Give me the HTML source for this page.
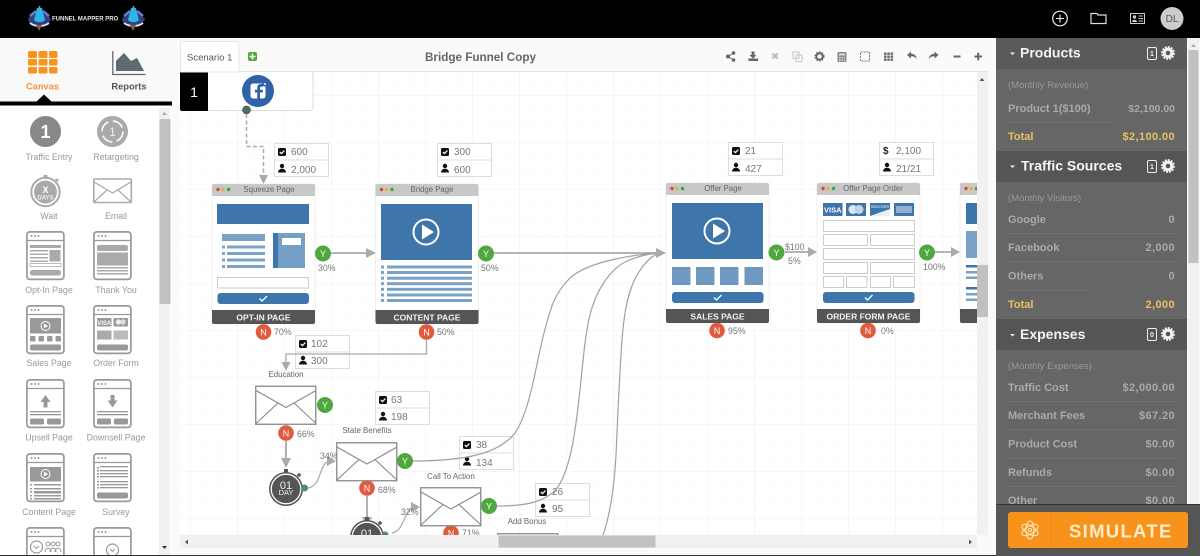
<!DOCTYPE html>
<html><head><meta charset="utf-8"><title>Funnel Mapper</title>
<style>
html,body{margin:0;padding:0;background:#fff;width:1200px;height:556px;overflow:hidden}
svg{display:block;font-family:"Liberation Sans",sans-serif}
.pl{font-size:8.8px;fill:#999;text-anchor:middle}
.st{font-size:10px;fill:#777}
.cl{font-size:7.8px;fill:#666;text-anchor:middle}
.ft{font-size:8.5px;font-weight:bold;fill:#f2f2f2;text-anchor:middle}
.pc{font-size:8.8px;fill:#777}
.lb{font-size:7.9px;fill:#666;text-anchor:middle}
.h{font-size:14px;font-weight:bold;fill:#f4f4f4}
.sub{font-size:9.5px;fill:#999}
.r{font-size:11px;font-weight:bold;fill:#aaa}
.v{font-size:11px;font-weight:bold;fill:#aaa;text-anchor:end;letter-spacing:.4px}
.y{fill:#e8c060}
.nt{font-size:9px;fill:#fff;text-anchor:middle}
</style></head><body>
<svg width="1200" height="556" viewBox="0 0 1200 556" xmlns="http://www.w3.org/2000/svg">
<defs>
<pattern id="g" width="15.67" height="15.67" patternUnits="userSpaceOnUse" x="3" y="2"><path d="M15.67 0V15.67M0 15.67H15.67" stroke="#f8f8f8" stroke-width="1" fill="none"/></pattern>
<pattern id="G" width="47" height="47" patternUnits="userSpaceOnUse" x="3" y="2"><path d="M47 0V47M0 47H47" stroke="#efefef" stroke-width="1" fill="none"/></pattern>
<clipPath id="cv"><rect x="180" y="72" width="797" height="463"/></clipPath>
<g id="st"><rect x=".5" y=".5" width="54" height="16.5" fill="#fff" stroke="#ddd"/><rect x=".5" y="17" width="54" height="16.5" fill="#fff" stroke="#ddd"/>
<rect x="4" y="5" width="8" height="8" rx="1.5" fill="#111"/><path d="M5.8 9l1.6 1.6 3-3" stroke="#fff" stroke-width="1.2" fill="none"/>
<circle cx="8" cy="23" r="2.2" fill="#111"/><path d="M4 29.5c0-5 8-5 8 0z" fill="#111"/></g>
<g id="stnc"><rect x=".5" y=".5" width="54" height="16.5" fill="#fff" stroke="#ddd"/><rect x=".5" y="17" width="54" height="16.5" fill="#fff" stroke="#ddd"/>
<circle cx="8" cy="23" r="2.2" fill="#111"/><path d="M4 29.5c0-5 8-5 8 0z" fill="#111"/></g>
<g id="card"><rect x="0" y="0" width="103" height="140" rx="2" fill="#fff" stroke="#e4e4e4" stroke-width=".6"/><path d="M0 12V2a2 2 0 0 1 2-2H101a2 2 0 0 1 2 2V12z" fill="#c8c8c8"/>
<circle cx="6" cy="5.5" r="1.7" fill="#d8483a"/><circle cx="11" cy="5.5" r="1.7" fill="#e0b040"/><circle cx="16.500" cy="5.500" r="1.700" fill="#3da24a"/>
<path d="M0 126H103V138a2 2 0 0 1-2 2H2a2 2 0 0 1-2-2z" fill="#555"/></g>
<g id="vid"><rect x="0" y="0" width="91" height="56" fill="#3e76ab"/><circle cx="45" cy="28" r="12.500" fill="none" stroke="#fff" stroke-width="2"/><path d="M41 20.500L53 28 41 35.500z" fill="#fff"/></g>
<g id="btn"><rect x="0" y="0" width="91.500" height="11" rx="3" fill="#3e76ab"/><path d="M42 5.500l2.500 2.500 5-5" stroke="#dff" stroke-width="1.500" fill="none"/></g>
<g id="env"><rect x=".75" y=".75" width="60" height="38" fill="#fff" stroke="#888" stroke-width="1.300"/><path d="M1 5L31 22 61 5M1 38L23 17.500M61 38L39 17.500" stroke="#888" stroke-width="1.100" fill="none"/></g>
<g id="timer"><circle cx="0" cy="0" r="17" fill="#555"/><circle cx="0" cy="0" r="14.800" fill="none" stroke="#fff" stroke-width="1.300"/><rect x="-2" y="-20" width="4" height="3.500" fill="#555"/><circle cx="13" cy="-14" r="1.800" fill="#555"/></g>
<g id="wf"><rect x=".9" y=".9" width="37" height="47.500" rx="3" fill="#fff" stroke="#999" stroke-width="1.700"/><path d="M1 9.500H38" stroke="#999" stroke-width="1.300"/><circle cx="5.500" cy="5" r="1" fill="#999"/><circle cx="9" cy="5" r="1" fill="#999"/><circle cx="12.500" cy="5" r="1" fill="#999"/></g>
<g id="orn"><path d="M1 13C2 8 7 6 12 6C17 6 22 9 24 12C22 17 17 19 12 19C7 19 2 17 1 13z" fill="#33407e"/><path d="M7 13L10 1H15L18 13C15 16 10 16 7 13z" fill="#2fb4ea"/><path d="M3 9L9 4M22 9L16 4" stroke="#5d7fd0" stroke-width="2.500"/><path d="M3 16C8 20 17 20 22 16" stroke="#dfe6f8" stroke-width="1.800" fill="none"/><path d="M9 18L12 24L15 18z" fill="#7a6630"/><circle cx="12.500" cy="0" r="1" fill="#4fd0c0"/></g>
</defs>

<!-- backdrop -->
<rect width="1200" height="556" fill="#fafafa"/>

<!-- canvas -->
<rect x="180" y="72" width="797" height="463" fill="#fff"/>
<rect x="180" y="72" width="797" height="463" fill="url(#g)"/>
<rect x="180" y="72" width="797" height="463" fill="url(#G)"/>
<g clip-path="url(#cv)">
<!-- fb node -->
<rect x="180.500" y="71" width="132.500" height="39.500" rx="3" fill="#fff" stroke="#ddd"/>
<path d="M180 72H208V111H182a2 2 0 0 1-2-2z" fill="#000"/>
<text x="194" y="97" font-size="14" fill="#fff" text-anchor="middle">1</text>
<circle cx="258" cy="91" r="16" fill="#2f62a6"/><rect x="250.500" y="83.500" width="15" height="15" rx="2.500" fill="#fff"/>
<path d="M260 98.500V92.500h2.600l.4-2.800H260V88c0-.8.300-1.300 1.400-1.300H263V84.100c-2.900-.4-5.700.1-5.700 3.500v2.100h-2.400v2.800h2.400v6z" fill="#2f62a6"/>
<circle cx="265" cy="84" r="2.500" fill="#2f62a6"/><circle cx="265" cy="84" r="1" fill="#fff"/>
<circle cx="246.500" cy="110" r="4" fill="#4f6b60" stroke="#333" stroke-width=".5"/>
<path d="M246.500 114V146.500H263.500V176" fill="none" stroke="#aaa" stroke-width="1.500" stroke-dasharray="4 2.500"/>
<path d="M259 175H268L263.500 184z" fill="#aaa"/>

<!-- arrows -->
<path d="M331 253H367M494 253H660M785 252H808M935 252H952" stroke="#aaa" stroke-width="1.800" fill="none"/>
<path d="M366 248L376 253 366 258zM808 247L817 252 808 257zM951 247L960 252 951 257z" fill="#aaa"/>

<!-- stat boxes -->
<use href="#st" x="274" y="143"/><text class="st" x="291" y="155">600</text><text class="st" x="291" y="173">2,000</text>
<use href="#st" x="437" y="143"/><text class="st" x="454" y="155">300</text><text class="st" x="454" y="173">600</text>
<use href="#st" x="728" y="142"/><text class="st" x="745" y="154">21</text><text class="st" x="745" y="172">427</text>
<use href="#stnc" x="879" y="142"/><text x="883" y="154" font-size="10" font-weight="bold" fill="#222">$</text><text class="st" x="896" y="154">2,100</text><text class="st" x="896" y="172">21/21</text>

<!-- squeeze card -->
<use href="#card" x="212" y="184"/>
<text class="cl" x="269" y="192">Squeeze Page</text>
<rect x="217" y="204" width="92" height="20" fill="#3e76ab"/>
<rect x="222" y="234" width="43" height="7" fill="#7aa1c6"/>
<g fill="#7aa1c6"><rect x="222" y="245.500" width="3" height="3"/><rect x="227" y="245.500" width="38" height="3"/><rect x="222" y="252" width="3" height="3"/><rect x="227" y="252" width="38" height="3"/><rect x="222" y="258.500" width="3" height="3"/><rect x="227" y="258.500" width="38" height="3"/><rect x="222" y="265" width="3" height="3"/><rect x="227" y="265" width="38" height="3"/></g>
<rect x="273" y="233" width="32" height="35" fill="#75a0c6"/><rect x="273" y="233" width="5" height="35" fill="#3e76ab"/><rect x="282" y="238" width="19" height="7" fill="#fff"/>
<rect x="217.500" y="277.500" width="91" height="10.500" fill="#fff" stroke="#ccc"/>
<use href="#btn" x="217.500" y="293"/>
<text class="ft" x="263.500" y="320.500">OPT-IN PAGE</text>

<!-- content card -->
<use href="#card" x="375.500" y="184"/>
<text class="cl" x="432" y="192">Bridge Page</text>
<use href="#vid" x="381" y="204"/>
<g fill="#7aa1c6"><rect x="381" y="265.500" width="3" height="3"/><rect x="387" y="265.500" width="85" height="3"/><rect x="381" y="271" width="3" height="3"/><rect x="387" y="271" width="85" height="3"/><rect x="381" y="276.700" width="3" height="3"/><rect x="387" y="276.700" width="85" height="3"/><rect x="381" y="282.200" width="3" height="3"/><rect x="387" y="282.200" width="85" height="3"/><rect x="381" y="287.800" width="3" height="3"/><rect x="387" y="287.800" width="85" height="3"/><rect x="381" y="293.500" width="3" height="3"/><rect x="387" y="293.500" width="85" height="3"/><rect x="381" y="299" width="3" height="3"/><rect x="387" y="299" width="85" height="3"/></g>
<text class="ft" x="427" y="320.500">CONTENT PAGE</text>

<!-- sales card -->
<use href="#card" x="666" y="183"/>
<text class="cl" x="723" y="191">Offer Page</text>
<use href="#vid" x="672" y="203"/>
<g fill="#6f99c0"><rect x="672" y="267" width="18.500" height="18"/><rect x="696" y="267" width="18.500" height="18"/><rect x="720" y="267" width="18.500" height="18"/><rect x="744.500" y="267" width="18.500" height="18"/></g>
<use href="#btn" x="672" y="292"/>
<text class="ft" x="717.500" y="319.500">SALES PAGE</text>

<!-- order card -->
<use href="#card" x="817" y="183"/>
<text class="cl" x="873" y="191">Offer Page Order</text>
<g fill="#3e76ab"><rect x="823" y="203" width="19.500" height="13"/><rect x="846" y="203" width="20" height="13"/><rect x="870" y="203" width="20" height="13"/><rect x="894" y="203" width="20" height="13"/></g>
<text x="832.800" y="212.500" font-size="7.500" font-weight="bold" fill="#fff" text-anchor="middle">VISA</text>
<circle cx="853" cy="209.500" r="4.500" fill="#dce8f2"/><circle cx="859" cy="209.500" r="4.500" fill="#c2d5e6"/>
<path d="M870 216L890 209V216z" fill="#e8f0f6"/><text x="880" y="208" font-size="3.500" fill="#fff" text-anchor="middle">DISCOVER</text>
<rect x="896" y="206" width="16" height="7" fill="#8fb0cf"/>
<g fill="#fff" stroke="#ccc"><rect x="823.500" y="220.500" width="91" height="11"/><rect x="823.500" y="234.500" width="44" height="11"/><rect x="870.500" y="234.500" width="44" height="11"/><rect x="823.500" y="248.500" width="91" height="11"/><rect x="823.500" y="262.500" width="44" height="11"/><rect x="870.500" y="262.500" width="44" height="11"/><rect x="823.500" y="276.500" width="20" height="11"/><rect x="846.500" y="276.500" width="20.500" height="11"/><rect x="870.500" y="276.500" width="20" height="11"/><rect x="893.500" y="276.500" width="21" height="11"/></g>
<use href="#btn" x="823" y="292"/>
<text class="ft" x="868.500" y="319.500">ORDER FORM PAGE</text>

<!-- clipped card -->
<use href="#card" x="960" y="183"/>
<rect x="966" y="203" width="20" height="21" fill="#3e76ab"/><rect x="966" y="231" width="20" height="27" fill="#7aa1c6"/>
<g fill="#3e76ab"><rect x="966" y="265" width="20" height="2.500"/><rect x="966" y="287" width="20" height="2.500"/></g>
<g fill="#7aa1c6"><rect x="966" y="271" width="20" height="2.500"/><rect x="966" y="276.500" width="20" height="2.500"/><rect x="966" y="293" width="20" height="2.500"/><rect x="966" y="298.500" width="20" height="2.500"/></g>

<!-- Y nodes -->
<g fill="#4fa83d"><circle cx="323" cy="253.500" r="8"/><circle cx="486" cy="253.500" r="8"/><circle cx="776.500" cy="252.500" r="8"/><circle cx="927" cy="252.500" r="8"/><circle cx="325" cy="405" r="8"/><circle cx="405" cy="461" r="8"/><circle cx="489" cy="506" r="8"/></g>
<g><text class="nt" x="323" y="257">Y</text><text class="nt" x="486" y="257">Y</text><text class="nt" x="776.500" y="256">Y</text><text class="nt" x="927" y="256">Y</text><text class="nt" x="325" y="408.500">Y</text><text class="nt" x="405" y="464.500">Y</text><text class="nt" x="489" y="509.500">Y</text></g>

<!-- stat boxes lower -->
<use href="#st" x="295" y="335"/><text class="st" x="311" y="347">102</text>
<text class="st" x="311" y="364">300</text>
<use href="#st" x="375" y="391"/><text class="st" x="391" y="403">63</text><text class="st" x="391" y="420">198</text>
<use href="#st" x="459" y="436"/><text class="st" x="476" y="448">38</text><text class="st" x="476" y="466">134</text>
<use href="#st" x="535" y="483"/><text class="st" x="552" y="495">26</text><text class="st" x="552" y="512">95</text>

<!-- curves -->
<g fill="none" stroke="#a0a0a0" stroke-width="1.200">
<path d="M413 461C470 461 500 452 515 433C530 410 535 370 543 337C550 310 553 295 570 278C590 260 640 254 660 253"/>
<path d="M497 506C520 506 545 504 558 487C572 465 576 425 580 390C584 350 586 330 590 315C596 290 610 270 625 262C640 255 650 254 660 253"/>
<path d="M603 535C610 515 614 490 616 455C618 410 619 385 621 355C623 320 626 295 637 275C645 262 652 255 660 253"/>
</g>
<path d="M656 248L666 253 656 258z" fill="#aaa"/>

<!-- connectors lower -->
<path d="M426.500 340V354H286V366" fill="none" stroke="#aaa" stroke-width="1.300"/>
<path d="M281.500 362H290.500L286 371z" fill="#aaa"/>
<path d="M286 441V463M367 496V522" stroke="#aaa" stroke-width="1.800"/>
<path d="M281 458H291L286 468zM362 517H372L367 527z" fill="#aaa"/>
<path d="M308 488C322 486 318 465 329 461" fill="none" stroke="#aaa" stroke-width="1.200"/>
<path d="M327 456L336 461 327 466z" fill="#aaa"/>
<path d="M392 533C405 530 403 512 413 507" fill="none" stroke="#aaa" stroke-width="1.200"/>
<path d="M411 502L420 507 411 512z" fill="#aaa"/>

<!-- N nodes -->
<g fill="#e05a3f"><circle cx="263.500" cy="332" r="7.800"/><circle cx="426.500" cy="332" r="7.800"/><circle cx="717" cy="330.500" r="7.800"/><circle cx="868" cy="330.500" r="7.800"/><circle cx="286" cy="433" r="7.800"/><circle cx="367" cy="488" r="7.800"/><circle cx="451" cy="533" r="7.800"/></g>
<text class="nt" x="263.500" y="335.500">N</text><text class="nt" x="426.500" y="335.500">N</text><text class="nt" x="717" y="334">N</text><text class="nt" x="868" y="334">N</text><text class="nt" x="286" y="436.500">N</text><text class="nt" x="367" y="491.500">N</text><text class="nt" x="451" y="536.500">N</text>

<!-- percents -->
<text class="pc" x="318" y="271">30%</text><text class="pc" x="481" y="271">50%</text><text class="pc" x="274" y="335">70%</text><text class="pc" x="437" y="335">50%</text>
<text class="pc" x="728" y="334">95%</text><text class="pc" x="881" y="334">0%</text>
<text class="pc" x="785" y="250">$100</text><text class="pc" x="788" y="264">5%</text><text class="pc" x="923" y="270">100%</text>
<text class="pc" x="297" y="437">66%</text><text class="pc" x="378" y="493">68%</text><text class="pc" x="320" y="459">34%</text><text class="pc" x="401" y="515">32%</text><text class="pc" x="462" y="536">71%</text>

<!-- envelopes -->
<text class="lb" x="286" y="377">Education</text><use href="#env" x="255" y="385.500"/>
<text class="lb" x="367" y="433">State Benefits</text><use href="#env" x="336" y="442"/>
<text class="lb" x="451" y="479">Call To Action</text><use href="#env" x="420" y="487"/>
<text class="lb" x="527" y="524">Add Bonus</text><use href="#env" x="497" y="533"/>

<!-- timers -->
<use href="#timer" x="286" y="489"/><text x="286" y="489" font-size="11" fill="#eee" text-anchor="middle">01</text><text x="286" y="495" font-size="7.500" fill="#eee" text-anchor="middle">DAY</text>
<circle cx="304.500" cy="488" r="3.500" fill="#4f8a78"/>
<use href="#timer" x="367" y="537"/><text x="367" y="537" font-size="11" fill="#eee" text-anchor="middle">01</text>
<circle cx="385" cy="535" r="3.500" fill="#4f8a78"/>
</g>

<!-- header of canvas -->
<rect x="180" y="40" width="808" height="32" fill="#fafafa"/>
<path d="M239 71.500H988" stroke="#e6e6e6"/>
<path d="M180.500 72V43a1.500 1.500 0 0 1 1.500-1.500H238a1.500 1.500 0 0 1 1 1.500V72z" fill="#fff" stroke="#e8e8e8"/>
<text x="187" y="60.500" font-size="9.500" fill="#555">Scenario 1</text>
<rect x="248" y="52" width="9" height="9" rx="2" fill="#4fa83d"/><path d="M252.500 53.500V59.500M249.500 56.500H255.500" stroke="#fff" stroke-width="1.500"/>
<text x="480.500" y="61" font-size="11.700" font-weight="bold" fill="#666" text-anchor="middle">Bridge Funnel Copy</text>

<!-- toolbar -->
<g fill="#666" stroke="none">
<circle cx="728" cy="56.500" r="2"/><circle cx="733.500" cy="53" r="1.800"/><circle cx="733.500" cy="60" r="1.800"/><path d="M728 56.500L733.500 53M728 56.500L733.500 60" stroke="#666"/>
<path d="M751.500 51.500h3v3.500h2l-3.500 3.500-3.500-3.500h2zM748.500 58.500h9.500v2.500h-9.500z"/>
<path d="M772.500 53.500l5 5M777.500 53.500l-5 5" stroke="#bbb" stroke-width="2"/>
<g fill="none" stroke="#c4c4c4"><rect x="793" y="52" width="6" height="6.500"/><rect x="796" y="55" width="6" height="6.500"/></g>
<circle cx="819.500" cy="56.500" r="3.200" fill="none" stroke="#666" stroke-width="2"/><circle cx="819.500" cy="56.500" r="4.600" fill="none" stroke="#666" stroke-width="1" stroke-dasharray="1.500 1.500"/>
<rect x="837.500" y="52" width="9" height="10" rx="1" fill="#888"/><rect x="839" y="53.500" width="6" height="2" fill="#ddd"/><g fill="#ddd"><rect x="839" y="57" width="1.500" height="1.500"/><rect x="841.500" y="57" width="1.500" height="1.500"/><rect x="844" y="57" width="1" height="1.500"/><rect x="839" y="59.500" width="1.500" height="1.500"/><rect x="841.500" y="59.500" width="1.500" height="1.500"/><rect x="844" y="59.500" width="1" height="1.500"/></g>
<rect x="860.500" y="52" width="9" height="9" fill="none" stroke="#777" stroke-dasharray="2 1"/>
<g><rect x="884" y="52.500" width="2.500" height="2.300"/><rect x="887.300" y="52.500" width="2.500" height="2.300"/><rect x="890.600" y="52.500" width="2.500" height="2.300"/><rect x="884" y="55.500" width="2.500" height="2.300"/><rect x="887.300" y="55.500" width="2.500" height="2.300"/><rect x="890.600" y="55.500" width="2.500" height="2.300"/><rect x="884" y="58.500" width="2.500" height="2.300"/><rect x="887.300" y="58.500" width="2.500" height="2.300"/><rect x="890.600" y="58.500" width="2.500" height="2.300"/></g>
<path d="M907 55l4-3.500v2.200c3.500 0 5.500 2 5.500 5.800-1-2.500-2.500-3.300-5.500-3.300v2.300z"/>
<path d="M938.500 55l-4-3.500v2.200c-3.500 0-5.500 2-5.500 5.800 1-2.500 2.500-3.300 5.500-3.300v2.300z"/>
<rect x="953.500" y="55.500" width="7" height="2"/>
<rect x="974.500" y="55.500" width="7.500" height="2"/><rect x="977.200" y="52.800" width="2" height="7.500"/>
</g>

<!-- canvas scrollbars -->
<rect x="977" y="72" width="11" height="463" fill="#f1f1f1"/>
<path d="M979.500 81L982 78 984.500 81z" fill="#555"/>
<rect x="977" y="265" width="11" height="52" fill="#c1c1c1"/>
<rect x="180" y="535" width="797" height="13" fill="#f1f1f1"/>
<rect x="498.500" y="535.500" width="157" height="12" fill="#c1c1c1"/>
<path d="M188 539.500L185 542 188 544.500z" fill="#555"/><path d="M969 539.500L972 542 969 544.500z" fill="#555"/>

<!-- left panel -->
<rect x="0" y="38" width="172" height="66" fill="#f9f9f9"/>
<rect x="0" y="105" width="172" height="451" fill="#fff"/>
<g fill="#f7941d"><rect x="28" y="51" width="9" height="7" rx="1.500"/><rect x="38.500" y="51" width="9" height="7" rx="1.500"/><rect x="49" y="51" width="8.500" height="7" rx="1.500"/><rect x="28" y="59" width="9" height="6.500" rx="1.500"/><rect x="38.500" y="59" width="9" height="6.500" rx="1.500"/><rect x="49" y="59" width="8.500" height="6.500" rx="1.500"/><rect x="28" y="67" width="9" height="6.500" rx="1.500"/><rect x="38.500" y="67" width="9" height="6.500" rx="1.500"/><rect x="49" y="67" width="8.500" height="6.500" rx="1.500"/></g>
<text x="42.500" y="89.500" font-size="9.300" font-weight="bold" fill="#f0963c" text-anchor="middle">Canvas</text>
<path d="M112.800 51V74.500H145.500" fill="none" stroke="#666" stroke-width="1.300"/>
<path d="M116 71V61L124 53 131 61 137 58 144 71z" fill="#5e6a6e"/>
<text x="129" y="89.500" font-size="9.300" font-weight="bold" fill="#555" text-anchor="middle">Reports</text>
<rect x="0" y="101.500" width="172" height="4" fill="#000"/><path d="M36 102L44 94.500 52 102z" fill="#000"/>

<!-- palette scrollbar -->
<rect x="159" y="108" width="11" height="447" fill="#f1f1f1"/>
<rect x="159.500" y="119" width="11" height="185" fill="#c1c1c1"/>
<path d="M162 115L164.500 112 167 115z" fill="#aaa"/><path d="M162 546L164.500 549 167 546z" fill="#333"/>

<!-- palette -->
<circle cx="45.500" cy="131.500" r="15.500" fill="#888"/><text x="45.500" y="138" font-size="18" font-weight="bold" fill="#fff" text-anchor="middle">1</text>
<circle cx="112.500" cy="131.500" r="15.500" fill="#aaa"/><circle cx="112.500" cy="131.500" r="10.500" fill="none" stroke="#fff" stroke-width="1.500" stroke-dasharray="12 4.500"/><text x="112.500" y="136" font-size="12" fill="#eee" text-anchor="middle">1</text>
<text class="pl" x="49" y="160">Traffic Entry</text><text class="pl" x="116" y="160">Retargeting</text>
<circle cx="45.500" cy="192" r="14.200" fill="#fff" stroke="#aaa" stroke-width="2"/><circle cx="45.500" cy="192" r="11.500" fill="#aaa"/><rect x="43.500" y="175" width="4" height="3" fill="#aaa"/><circle cx="57" cy="180" r="1.500" fill="#aaa"/>
<text x="45.500" y="193" font-size="9" font-weight="bold" fill="#fff" text-anchor="middle">X</text><text x="45.500" y="199.500" font-size="6" font-weight="bold" fill="#eee" text-anchor="middle">DAYS</text>
<rect x="93.800" y="179" width="37.500" height="23.500" rx="1" fill="#fff" stroke="#aaa" stroke-width="1.600"/><path d="M94 182L112.500 193 131 182M94 202L107 190M131 202L118 190" fill="none" stroke="#aaa" stroke-width="1.300"/>
<text class="pl" x="49" y="219">Wait</text><text class="pl" x="116" y="219">Email</text>

<!-- row 1 -->
<use href="#wf" x="26" y="231"/><use href="#wf" x="93" y="231"/>
<g fill="#aaa"><rect x="30" y="245" width="31" height="3"/><rect x="30" y="250" width="18" height="1.500"/><rect x="30" y="253.500" width="18" height="1.500"/><rect x="30" y="257" width="18" height="1.500"/><rect x="30" y="260.500" width="18" height="1.500"/><rect x="49.500" y="250" width="11" height="11.500"/><rect x="30" y="270" width="31" height="5.500" rx="2.500"/>
<rect x="97" y="245" width="31" height="6" rx="2"/><rect x="97" y="252.500" width="31" height="13"/><rect x="97" y="267" width="31" height="1.500"/><rect x="97" y="270" width="31" height="1.500"/><rect x="97" y="273" width="31" height="1.500"/></g>
<rect x="30" y="263.500" width="31" height="3" fill="#fff" stroke="#aaa" stroke-width=".8"/>
<text class="pl" x="49" y="293">Opt-In Page</text><text class="pl" x="116" y="293">Thank You</text>

<!-- row 2 -->
<use href="#wf" x="26" y="305"/><use href="#wf" x="93" y="305"/>
<g fill="#999"><rect x="30" y="318" width="31" height="15.500"/><rect x="30" y="336" width="5.500" height="5.500" rx="1"/><rect x="38.500" y="336" width="5.500" height="5.500" rx="1"/><rect x="47" y="336" width="5.500" height="5.500" rx="1"/><rect x="55.500" y="336" width="5.500" height="5.500" rx="1"/><rect x="30" y="344.500" width="31" height="6" rx="2"/>
<rect x="97" y="318" width="14.500" height="8.500" rx="1"/><rect x="113.500" y="318" width="14.500" height="8.500" rx="1"/><rect x="97" y="330.500" width="14.500" height="9" fill="#aaa"/><rect x="113.500" y="330.500" width="14.500" height="9" fill="#bbb"/><rect x="97" y="344.500" width="31" height="6" rx="2"/></g>
<circle cx="45.500" cy="326" r="4.500" fill="none" stroke="#fff"/><path d="M44 323.800L48 326 44 328.200z" fill="#fff"/>
<text x="104.200" y="325" font-size="6" font-weight="bold" fill="#fff" text-anchor="middle">VISA</text><circle cx="118.500" cy="322" r="2.700" fill="#eee"/><circle cx="123" cy="322" r="2.700" fill="#ddd"/>
<text class="pl" x="49" y="366">Sales Page</text><text class="pl" x="116" y="366">Order Form</text>

<!-- row 3 -->
<use href="#wf" x="26" y="379"/><use href="#wf" x="93" y="379"/>
<g fill="#999"><path d="M45.500 395L50.500 402H47.500V407.500H43.500V402H40.500z"/><path d="M112.500 407.500L117.500 400.500H114.500V395H110.500V400.500H107.500z"/>
<rect x="30" y="411" width="31" height="1.300"/><rect x="30" y="414" width="31" height="1.300"/><rect x="97" y="411" width="31" height="1.300"/><rect x="97" y="414" width="31" height="1.300"/>
<rect x="30" y="418.500" width="14" height="6" rx="1.500"/><rect x="47" y="418.500" width="14" height="6" rx="1.500"/><rect x="97" y="418.500" width="14" height="6" rx="1.500"/><rect x="114" y="418.500" width="14" height="6" rx="1.500"/></g>
<text class="pl" x="49" y="440.500">Upsell Page</text><text class="pl" x="116" y="440.500">Downsell Page</text>

<!-- row 4 -->
<use href="#wf" x="26" y="453"/><use href="#wf" x="93" y="453"/>
<g fill="#999"><rect x="30" y="467" width="31" height="14.500"/><rect x="30" y="484" width="2" height="1.500"/><rect x="34" y="484" width="27" height="1.500"/><rect x="30" y="488" width="2" height="1.500"/><rect x="34" y="488" width="27" height="1.500"/><rect x="30" y="491" width="2" height="1.500"/><rect x="34" y="491" width="27" height="2.500"/><rect x="30" y="495" width="2" height="1.500"/><rect x="34" y="495" width="27" height="1.500"/><rect x="30" y="498" width="2" height="1.500"/><rect x="34" y="498" width="27" height="1.500"/>
<rect x="97" y="467" width="2" height="1.500"/><rect x="100" y="466" width="28" height="1.300"/><rect x="97" y="470" width="2" height="1.500"/><rect x="100" y="470" width="28" height="1.300"/><rect x="97" y="473" width="2" height="1.500"/><rect x="100" y="473" width="28" height="1.300"/><rect x="97" y="476" width="2" height="1.500"/><rect x="100" y="476" width="28" height="1.300"/><rect x="97" y="481" width="2" height="1.500"/><rect x="100" y="481" width="28" height="1.300"/><rect x="97" y="484" width="2" height="1.500"/><rect x="100" y="484" width="28" height="1.300"/><rect x="97" y="487" width="2" height="1.500"/><rect x="100" y="487" width="28" height="1.300"/><rect x="97" y="492.500" width="31" height="6" rx="2"/></g>
<circle cx="45.500" cy="474" r="4.500" fill="none" stroke="#fff"/><path d="M44 471.800L48 474 44 476.200z" fill="#fff"/>
<text class="pl" x="49" y="515">Content Page</text><text class="pl" x="116" y="515">Survey</text>

<!-- row 5 -->
<use href="#wf" x="26" y="527"/><use href="#wf" x="93" y="527"/>
<circle cx="36.500" cy="547" r="6" fill="#fff" stroke="#999" stroke-width="1.200"/><path d="M34 546l2.500 2.500 2.500-2.500" fill="none" stroke="#999"/>
<circle cx="48" cy="544" r="2" fill="none" stroke="#999"/><circle cx="53" cy="544" r="2" fill="none" stroke="#999"/><circle cx="58" cy="544" r="2" fill="none" stroke="#999"/><path d="M45 552c0-5 6-5 6-0M50 552c0-5 6-5 6 0M55 552c0-5 6-5 6 0" fill="none" stroke="#999"/>
<circle cx="112.500" cy="550" r="6" fill="#fff" stroke="#999" stroke-width="1.200"/><path d="M110 549l2.500 2.500 2.500-2.500" fill="none" stroke="#999"/>

<!-- right panel -->
<rect x="996" y="38" width="191" height="466" fill="#666"/>
<rect x="996" y="38" width="191" height="31" fill="#5a5a5a"/>
<rect x="996" y="151" width="191" height="31" fill="#555"/>
<rect x="996" y="319" width="191" height="31" fill="#555"/>
<g fill="#eee"><path d="M1010 52.500h5l-2.500 2.500z"/><path d="M1010 165.500h5l-2.500 2.500z"/><path d="M1010 334h5l-2.500 2.500z"/></g>
<text class="h" x="1020" y="57.500">Products</text><text class="h" x="1021" y="170.500">Traffic Sources</text><text class="h" x="1020" y="339">Expenses</text>
<g fill="none" stroke="#eee"><rect x="1147.500" y="47.500" width="9" height="12" rx="1.500"/><rect x="1147.500" y="160.500" width="9" height="12" rx="1.500"/><rect x="1147.500" y="328.500" width="9" height="12" rx="1.500"/></g>
<g font-size="7" fill="#eee" text-anchor="middle" font-weight="bold"><text x="1152" y="56">1</text><text x="1152" y="169">1</text><text x="1152" y="337">0</text></g>
<g fill="none" stroke="#f4f4f4"><circle cx="1168" cy="53" r="3.800" stroke-width="3"/><circle cx="1168" cy="53" r="6" stroke-width="1.800" stroke-dasharray="2 1.100"/><circle cx="1168" cy="166" r="3.800" stroke-width="3"/><circle cx="1168" cy="166" r="6" stroke-width="1.800" stroke-dasharray="2 1.100"/><circle cx="1168" cy="334" r="3.800" stroke-width="3"/><circle cx="1168" cy="334" r="6" stroke-width="1.800" stroke-dasharray="2 1.100"/></g>
<path d="M1008 122.500H1116M1008 233.500H1176M1008 261.500H1176M1008 290.500H1088M1008 401.500H1176M1008 429.500H1176M1008 458.500H1176M1008 486.500H1176" stroke="#707070"/>
<text class="sub" x="1008" y="88">(Monthly Revenue)</text>
<text class="r" x="1008" y="112">Product 1($100)</text><text class="v" x="1175" y="112" style="letter-spacing:0;font-size:10.500px">$2,100.00</text>
<text class="r y" x="1008" y="140">Total</text><text class="v y" x="1175" y="140">$2,100.00</text>
<text class="sub" x="1008" y="201">(Monthly Visitors)</text>
<text class="r" x="1008" y="223">Google</text><text class="v" x="1175" y="223">0</text>
<text class="r" x="1008" y="251">Facebook</text><text class="v" x="1175" y="251">2,000</text>
<text class="r" x="1008" y="279.500">Others</text><text class="v" x="1175" y="279.500">0</text>
<text class="r y" x="1008" y="308">Total</text><text class="v y" x="1175" y="308">2,000</text>
<text class="sub" x="1008" y="369">(Monthly Expenses)</text>
<text class="r" x="1008" y="391">Traffic Cost</text><text class="v" x="1175" y="391">$2,000.00</text>
<text class="r" x="1008" y="419">Merchant Fees</text><text class="v" x="1175" y="419">$67.20</text>
<text class="r" x="1008" y="447.500">Product Cost</text><text class="v" x="1175" y="447.500">$0.00</text>
<text class="r" x="1008" y="476">Refunds</text><text class="v" x="1175" y="476">$0.00</text>
<text class="r" x="1008" y="504">Other</text><text class="v" x="1175" y="504">$0.00</text>

<!-- right scrollbar -->
<rect x="1188" y="38" width="11" height="466" fill="#f1f1f1"/>
<rect x="1188.500" y="50" width="10" height="213" fill="#c1c1c1"/>
<path d="M1191 47L1193.500 44 1196 47z" fill="#aaa"/>

<!-- simulate -->
<rect x="996" y="504" width="204" height="52" fill="#555"/><path d="M996 504.500H1200" stroke="#333"/>
<rect x="1008" y="512" width="180" height="36" rx="3" fill="#f7931a"/>
<path d="M1051 512V548" stroke="#e88a14"/>
<g fill="none" stroke="#ffe6bd" stroke-width="1.100"><ellipse cx="1030" cy="530" rx="9" ry="4" transform="rotate(30 1030 530)"/><ellipse cx="1030" cy="530" rx="9" ry="4" transform="rotate(-30 1030 530)"/><ellipse cx="1030" cy="530" rx="9" ry="4" transform="rotate(90 1030 530)"/><circle cx="1030" cy="530" r="1.500"/></g>
<text x="1069" y="537.500" font-size="18.500" font-weight="bold" fill="#ffecc9" letter-spacing="1.300">SIMULATE</text>

<!-- topbar -->
<rect x="0" y="0" width="1200" height="38" fill="#000"/>
<path d="M0 555.500H996" stroke="#333"/>
<use href="#orn" x="27" y="7"/><use href="#orn" x="121" y="7"/>
<text x="52" y="20.500" font-size="6" font-weight="bold" fill="#e8e8e8">FUNNEL MAPPER PRO</text>
<circle cx="1060" cy="18.500" r="7.300" fill="none" stroke="#eee" stroke-width="1.200"/><path d="M1060 14.500V22.500M1056 18.500H1064" stroke="#eee" stroke-width="1.100"/>
<path d="M1091 13.500H1097L1098 15H1106V23.500H1091z" fill="none" stroke="#ddd" stroke-width="1.200"/>
<rect x="1130.500" y="13.500" width="14" height="10" fill="none" stroke="#ccc"/><circle cx="1134.500" cy="17" r="1.700" fill="#ccc"/><path d="M1132 22c0-3 5-3 5 0z" fill="#ccc"/><path d="M1138.500 16H1143M1138.500 18.500H1143M1138.500 21H1143" stroke="#ccc"/>
<circle cx="1172" cy="18.500" r="11.500" fill="#ccc"/><text x="1172" y="22" font-size="10" fill="#555" text-anchor="middle">DL</text>
</svg>
</body></html>
